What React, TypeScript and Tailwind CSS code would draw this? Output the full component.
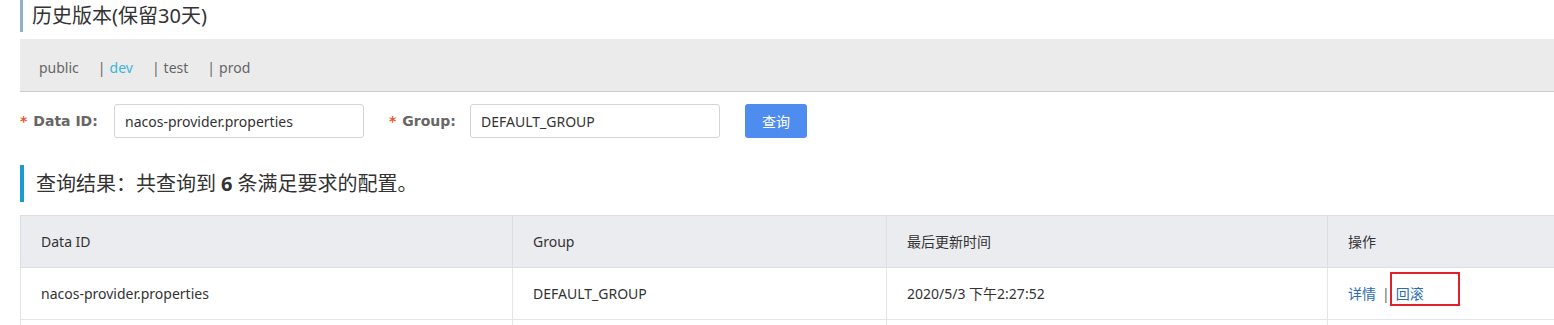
import React from "react";

const font = { fontFamily: '"Noto Sans", "Noto Sans CJK SC", sans-serif' };

function Label({ text, width }: { text: string; width: string }) {
  return (
    <label
      className={`flex items-center text-[14px] font-bold text-[#666] whitespace-nowrap ${width}`}
      style={{ fontFamily: '"DejaVu Sans", "Noto Sans CJK SC", sans-serif' }}
    >
      <span className="text-[#e9572b] mr-[6px]">*</span>
      {text}
    </label>
  );
}

export default function App() {
  const tabs = ["public", "dev", "test", "prod"];
  return (
    <div className="w-[1554px] h-[325px] bg-white overflow-hidden" style={font}>
      <div className="pl-5">
        <h2 className="border-l-[3px] border-[#8fb0c6] pl-[9px] h-[32px] flex items-center text-[20px] text-[#333]">
          历史版本(保留30天)
        </h2>

        <div className="mt-[7px] h-[53px] bg-[#ebebeb] border-b border-[#cccccc] flex items-center pt-[5px] pl-[19px] text-[14px] text-[#666]">
          {tabs.map((t, i) => (
            <span key={t} className="flex items-center">
              {i > 0 && <span className="mr-[4px]">|</span>}
              <span className={i === 1 ? "text-[#3cb4d8]" : ""}>{t}</span>
              {i < 3 && <span className="w-[19px]" />}
            </span>
          ))}
        </div>

        <div className="flex items-center mt-[12px] h-[34px]">
          <Label text="Data ID:" width="w-[94px]" />
          <div className="w-[250px] h-[34px] border border-[#d4d4d4] rounded-[3px] flex items-center px-[10px] text-[14px] text-[#333]">
            nacos-provider.properties
          </div>
          <div className="ml-[25px]">
            <Label text="Group:" width="w-[81px]" />
          </div>
          <div className="w-[250px] h-[34px] border border-[#d4d4d4] rounded-[3px] flex items-center px-[10px] text-[14px] text-[#333]">
            DEFAULT_GROUP
          </div>
          <button className="ml-[25px] w-[62px] h-[34px] rounded-[3px] bg-[#4f8cf0] text-white text-[14px]">
            查询
          </button>
        </div>

        <div className="mt-[27px] h-[37px] border-l-[4px] border-[#1a9bd0] pl-[12px] flex items-center text-[20px] text-[#333]">
          查询结果：共查询到 <b className="mx-[5px]">6</b> 条满足要求的配置。
        </div>

        <table className="mt-[13px] w-[1560px] border-collapse text-[14px] text-[#333]">
          <colgroup>
            <col className="w-[492px]" />
            <col className="w-[374px]" />
            <col className="w-[441px]" />
            <col />
          </colgroup>
          <thead>
            <tr className="h-[52px] bg-[#ebecf0]">
              <th className="font-normal text-left pl-5 border border-[#dcdfe5]">Data ID</th>
              <th className="font-normal text-left pl-5 border border-[#dcdfe5]">Group</th>
              <th className="font-normal text-left pl-5 border border-[#dcdfe5]">最后更新时间</th>
              <th className="font-normal text-left pl-5 border border-[#dcdfe5]">操作</th>
            </tr>
          </thead>
          <tbody>
            <tr className="h-[52px]">
              <td className="pl-5 border border-[#e3e5ea]">nacos-provider.properties</td>
              <td className="pl-5 border border-[#e3e5ea]">DEFAULT_GROUP</td>
              <td className="pl-5 border border-[#e3e5ea]">2020/5/3 下午2:27:52</td>
              <td className="pl-5 border border-[#e3e5ea]">
                <span className="text-[#2b6cb0]">详情</span>
                <span className="mx-[6px] text-[#666]">|</span>
                <span className="relative text-[#2b6cb0]">
                  回滚
                  <span className="absolute -left-[6px] -top-[12px] w-[70px] h-[34px] border-2 border-[#e0202a]" />
                </span>
              </td>
            </tr>
            <tr className="h-[20px]">
              <td className="border border-[#e3e5ea]" />
              <td className="border border-[#e3e5ea]" />
              <td className="border border-[#e3e5ea]" />
              <td className="border border-[#e3e5ea]" />
            </tr>
          </tbody>
        </table>
      </div>
    </div>
  );
}
